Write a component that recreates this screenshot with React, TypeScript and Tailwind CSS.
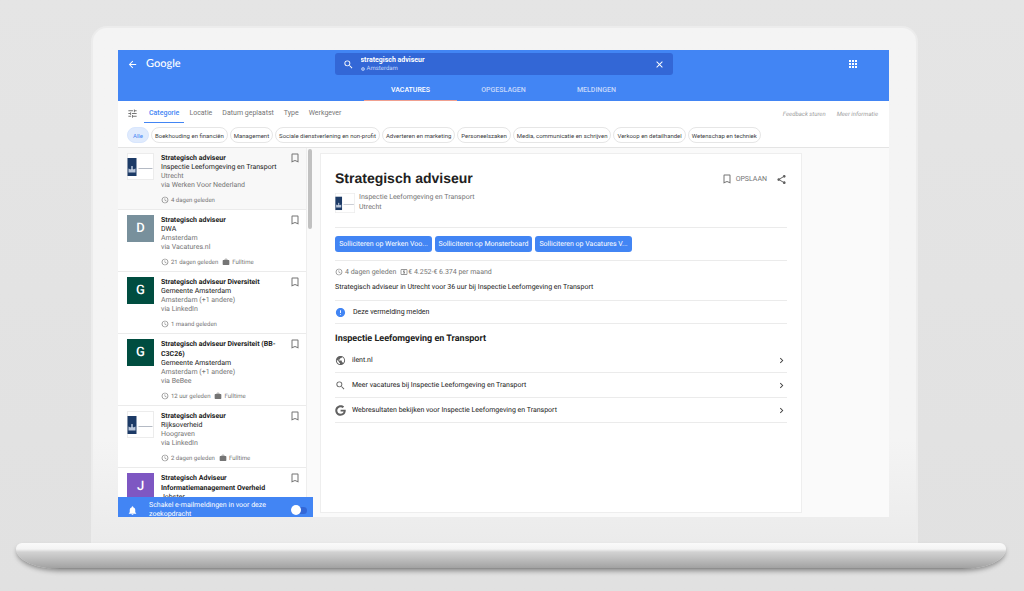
import { useState } from 'react';
import {
  MdAccessTime,
  MdApps,
  MdArrowBack,
  MdBookmarkBorder,
  MdChevronRight,
  MdClose,
  MdError,
  MdNotifications,
  MdOutlineLocalAtm,
  MdPublic,
  MdSearch,
  MdShare,
  MdTune,
  MdWork,
} from 'react-icons/md';
import { FaGoogle } from 'react-icons/fa';
import clsx from 'clsx';

interface Job {
  title: string;
  company: string;
  place: string;
  via?: string;
  posted?: string;
  fulltime?: boolean;
  letter?: string;
  color?: string;
}

const jobs: Job[] = [
  { title: 'Strategisch adviseur', company: 'Inspectie Leefomgeving en Transport', place: 'Utrecht', via: 'via Werken Voor Nederland', posted: '4 dagen geleden' },
  { title: 'Strategisch adviseur', company: 'DWA', place: 'Amsterdam', via: 'via Vacatures.nl', posted: '21 dagen geleden', fulltime: true, letter: 'D', color: 'bg-[#78909c]' },
  { title: 'Strategisch adviseur Diversiteit', company: 'Gemeente Amsterdam', place: 'Amsterdam (+1 andere)', via: 'via LinkedIn', posted: '1 maand geleden', letter: 'G', color: 'bg-[#004d40]' },
  { title: 'Strategisch adviseur Diversiteit (BB-C3C26)', company: 'Gemeente Amsterdam', place: 'Amsterdam (+1 andere)', via: 'via BeBee', posted: '12 uur geleden', fulltime: true, letter: 'G', color: 'bg-[#004d40]' },
  { title: 'Strategisch adviseur', company: 'Rijksoverheid', place: 'Hoograven', via: 'via LinkedIn', posted: '2 dagen geleden', fulltime: true },
  { title: 'Strategisch Adviseur Informatiemanagement Overheid', company: 'Jobster', place: 'Amsterdam', letter: 'J', color: 'bg-[#7e57c2]' },
];

const tabs = ['VACATURES', 'OPGESLAGEN', 'MELDINGEN'];
const filters = ['Categorie', 'Locatie', 'Datum geplaatst', 'Type', 'Werkgever'];
const categories = [
  'Alle',
  'Boekhouding en financiën',
  'Management',
  'Sociale dienstverlening en non-profit',
  'Adverteren en marketing',
  'Personeelszaken',
  'Media, communicatie en schrijven',
  'Verkoop en detailhandel',
  'Wetenschap en techniek',
];
const applyLinks = ['Solliciteren op Werken Voo...', 'Solliciteren op Monsterboard', 'Solliciteren op Vacatures V...'];

const companyLinks = [
  { icon: MdPublic, label: 'ilent.nl' },
  { icon: MdSearch, label: 'Meer vacatures bij Inspectie Leefomgeving en Transport' },
  { icon: FaGoogle, label: 'Webresultaten bekijken voor Inspectie Leefomgeving en Transport' },
];

const GovLogo = ({ className }: { className: string }) => (
  <svg viewBox="0 0 54 54" className={clsx('shrink-0 bg-white', className)} aria-hidden="true">
    <rect x="1" y="1" width="52" height="52" fill="none" stroke="#ececec" strokeWidth="2" />
    <rect x="1" y="10" width="18" height="36" fill="#1c3a66" />
    <path d="M3 39v-8l4 2 3-4 3 4 4-2v8z" fill="#b9c6da" />
    <circle cx="10" cy="28" r="2" fill="#b9c6da" />
    <path d="M23 31h28" stroke="#b4bac4" strokeWidth="2" />
  </svg>
);

const JobItem = ({ job, active }: { job: Job; active: boolean }) => (
  <li className={clsx('flex items-start border-b border-[#ebebeb] pt-1 pr-[5px] pb-1 pl-[9px]', active && 'bg-[#f8f8f8]')}>
    {job.letter ? (
      <div className={clsx('mt-px flex size-[27px] shrink-0 items-center justify-center text-[13px] font-medium text-white', job.color)}>
        {job.letter}
      </div>
    ) : (
      <GovLogo className="mt-px size-[27px]" />
    )}
    <div className="mt-px ml-[7px] min-w-0 flex-1 text-[7px] leading-[9px] text-[#757575]">
      <h3 className="leading-[10px] font-bold text-[#212121]">{job.title}</h3>
      <p className="text-[#212121]">{job.company}</p>
      <p>{job.place}</p>
      <p>{job.via}</p>
      <div className="mt-[5px] flex h-[10px] items-center text-[6px]">
        {job.posted && (
          <>
            <MdAccessTime className="mr-[2px] size-2" />
            <span>{job.posted}</span>
          </>
        )}
        {job.fulltime && (
          <>
            <MdWork className="mr-[2px] ml-1 size-2" />
            <span>Fulltime</span>
          </>
        )}
      </div>
    </div>
    <button aria-label="Opslaan" className="text-[#757575]">
      <MdBookmarkBorder className="size-3" />
    </button>
  </li>
);

const Header = ({ tab, onTab }: { tab: string; onTab: (t: string) => void }) => (
  <header className="shrink-0 bg-[#4285f4] pt-[3px] text-white">
    <div className="grid grid-cols-[1fr_338px_1fr] items-center">
      <div className="flex items-center gap-2 pl-[9px]">
        <button aria-label="Terug">
          <MdArrowBack className="size-[11px]" />
        </button>
        <a href="#" className="font-[Lato,sans-serif] text-[11px] leading-3 font-medium">
          Google
        </a>
      </div>
      <div className="flex h-[22px] items-center rounded-[3px] bg-[#3367d6] px-2">
        <MdSearch className="mr-[7px] size-[11px] shrink-0" />
        <div className="flex-1">
          <input
            aria-label="Zoeken"
            defaultValue="strategisch adviseur"
            className="block h-[10px] w-full bg-transparent text-[7px] leading-[10px] font-bold outline-none"
          />
          <div className="flex items-center gap-[2px] text-[6px] leading-[8px] text-[#c6d8fb]">
            <svg viewBox="0 0 8 8" className="size-1" fill="none" stroke="currentColor" strokeWidth="1.5">
              <circle cx="4" cy="4" r="3" />
              <circle cx="4" cy="4" r="1" />
            </svg>
            Amsterdam
          </div>
        </div>
        <button aria-label="Wissen">
          <MdClose className="size-[11px]" />
        </button>
      </div>
      <div className="flex justify-end pr-[30px]">
        <button aria-label="Apps">
          <MdApps className="size-3" />
        </button>
      </div>
    </div>
    <nav className="mt-1 flex justify-center">
      {tabs.map((t) => (
        <button
          key={t}
          onClick={() => onTab(t)}
          className={clsx(
            'h-[22px] w-[93px] border-b pt-[2px] text-[7px] font-medium',
            t === tab ? 'border-[#f0a090] text-white' : 'border-transparent text-[#c6d8fb]',
          )}
        >
          {t}
        </button>
      ))}
    </nav>
  </header>
);

const FilterBar = () => {
  const [category, setCategory] = useState('Alle');

  return (
    <div className="shrink-0 border-b border-[#e4e4e4] bg-white pr-[11px] pb-1 pl-[9px]">
      <div className="flex h-[22px] items-center text-[7px] text-[#757575]">
        <MdTune className="mt-[3px] mr-[6px] size-[11px]" />
        {filters.map((f, i) => (
          <button
            key={f}
            className={clsx(
              'h-[22px] border-b px-[5px] pt-[3px]',
              i === 0 ? 'border-[#4285f4] font-medium text-[#4285f4]' : 'border-transparent',
            )}
          >
            {f}
          </button>
        ))}
        <div className="mt-[5px] ml-auto flex gap-[11px] text-[6px] text-[#9e9e9e] italic">
          <a href="#">Feedback sturen</a>
          <a href="#">Meer informatie</a>
        </div>
      </div>
      <div className="mt-1 flex gap-[2px]">
        {categories.map((c) => (
          <button
            key={c}
            onClick={() => setCategory(c)}
            className={clsx(
              'h-4 rounded-full border text-[6px] whitespace-nowrap',
              c === category ? 'border-[#d8e6fd] bg-[#e0ebfd] px-[5px] text-[#4285f4]' : 'border-[#e6e6e6] px-[3px] text-[#3c4043]',
            )}
          >
            {c}
          </button>
        ))}
      </div>
    </div>
  );
};

const JobList = () => (
  <aside className="flex w-[195px] shrink-0 flex-col bg-white">
    <div className="flex min-h-0 flex-1 overflow-hidden">
      <ul className="flex-1">
        {jobs.map((job, i) => (
          <JobItem key={i} job={job} active={i === 0} />
        ))}
      </ul>
      <div className="w-[7px] border-l border-[#eeeeee] bg-[#fafafa] pt-px pl-px">
        <div className="h-20 w-1 rounded-full bg-[#c1c1c1]" />
      </div>
    </div>
    <label className="flex h-5 shrink-0 items-center overflow-hidden bg-[#4285f4] pr-[6px] pl-[9px] text-white">
      <MdNotifications className="mt-[6px] size-[11px] shrink-0" />
      <span className="mt-[6px] ml-[11px] w-[120px] text-[7px] leading-[9px]">
        Schakel e-mailmeldingen in voor deze zoekopdracht
      </span>
      <input
        type="checkbox"
        role="switch"
        className="mt-[6px] ml-auto flex h-[7px] w-4 appearance-none items-center rounded-full bg-[#3367d6] before:size-[10px] before:shrink-0 before:rounded-full before:bg-white"
      />
    </label>
  </aside>
);

const JobDetail = () => (
  <main className="mt-[5px] mr-[87px] mb-1 ml-[7px] min-w-0 flex-1 overflow-hidden border border-[#eeeeee] bg-white px-[14px] text-[7px] leading-[10px] text-[#212121]">
    <div className="flex items-center pt-[14px]">
      <h1 className="flex-1 font-['Liberation_Sans',sans-serif] text-[14px] leading-5 font-bold">Strategisch adviseur</h1>
      <button className="mt-[2px] flex items-center gap-[3px] text-[#757575]">
        <MdBookmarkBorder className="size-3" />
        OPSLAAN
      </button>
      <button aria-label="Delen" className="mt-[2px] ml-[9px] text-[#616161]">
        <MdShare className="size-[11px]" />
      </button>
    </div>
    <div className="mt-1 flex gap-1 pb-[14px] text-[#757575]">
      <GovLogo className="mt-px size-5" />
      <div>
        <p>Inspectie Leefomgeving en Transport</p>
        <p>Utrecht</p>
      </div>
    </div>
    <div className="flex gap-[3px] border-y border-[#ebebeb] py-2">
      {applyLinks.map((label) => (
        <a
          key={label}
          href="#"
          className="h-4 w-[97px] rounded-[3px] bg-[#4285f4] text-center text-[7px] leading-4 whitespace-nowrap text-white"
        >
          {label}
        </a>
      ))}
    </div>
    <div className="border-b border-[#ebebeb] pt-[6px] pb-2">
      <div className="flex items-center text-[#757575]">
        <MdAccessTime className="mr-[2px] size-2" />
        <span className="mr-1">4 dagen geleden</span>
        <MdOutlineLocalAtm className="size-2" />
        <span>€ 4.252-€ 6.374 per maand</span>
      </div>
      <p className="mt-[5px]">Strategisch adviseur in Utrecht voor 36 uur bij Inspectie Leefomgeving en Transport</p>
    </div>
    <button className="flex h-[23px] w-full items-center gap-[7px] border-b border-[#ebebeb]">
      <MdError className="size-[11px] text-[#4285f4]" />
      Deze vermelding melden
    </button>
    <h2 className="mt-[9px] mb-[3px] text-[9px] leading-3 font-bold">Inspectie Leefomgeving en Transport</h2>
    {companyLinks.map(({ icon: Icon, label }) => (
      <a key={label} href="#" className="flex h-[25px] items-center border-b border-[#ebebeb]">
        <Icon className="mr-[6px] size-[11px] text-[#616161]" />
        <span className="flex-1">{label}</span>
        <MdChevronRight className="size-[11px] text-[#424242]" />
      </a>
    ))}
  </main>
);

export default function App() {
  const [tab, setTab] = useState('VACATURES');

  return (
    <div className="flex h-screen flex-col bg-linear-to-b from-[#e5e5e5] to-[#e1e1e1] pt-[26px] pb-[22px] font-[Roboto,sans-serif] [text-rendering:geometricPrecision]">
      <div className="mr-[106px] ml-[91px] flex min-h-0 flex-1 flex-col rounded-t-[16px] border-x-2 border-t-2 border-[#ececec] bg-linear-to-b from-[#f4f4f4] from-80% to-[#ebebeb] pt-[22px] pr-[27px] pb-[26px] pl-[25px]">
        <div className="flex min-h-0 flex-1 flex-col overflow-hidden bg-[#fafafa]">
          <Header tab={tab} onTab={setTab} />
          <FilterBar />
          <div className="flex min-h-0 flex-1">
            <JobList />
            <JobDetail />
          </div>
        </div>
      </div>
      {/* laptop base */}
      <div className="mr-[18px] ml-4 h-[26px] shrink-0 rounded-t-[6px] rounded-b-[44px_20px] bg-[linear-gradient(#fafafa_0,#f4f4f4_6px,#d2d2d2_9px,#c4c4c4_14px,#a2a2a2_25px,#7a7a7a)] shadow-[0_3px_5px_-1px_rgba(0,0,0,0.4)]" />
    </div>
  );
}
